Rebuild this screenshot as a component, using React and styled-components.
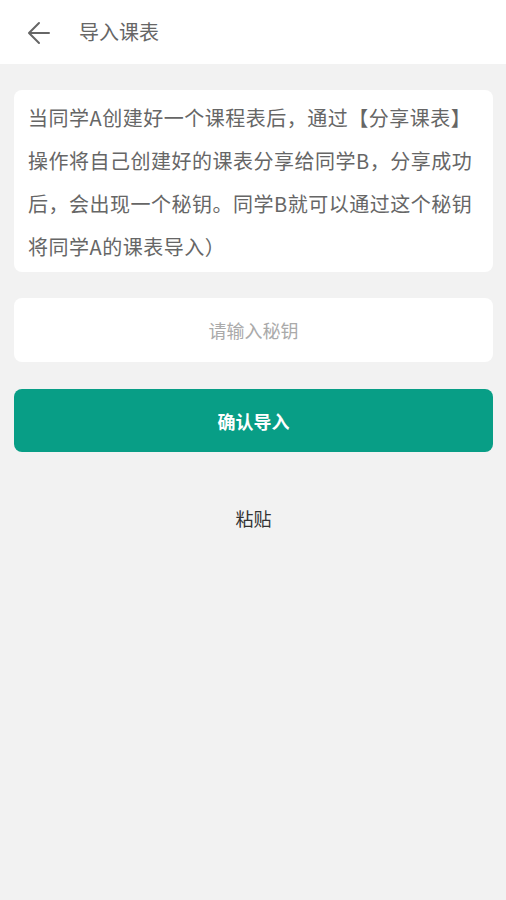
import { createGlobalStyle, styled } from 'styled-components';

const GlobalStyle = createGlobalStyle`
  html, body {
    margin: 0;
    padding: 0;
    background-color: #f2f2f2;
    font-family: "Noto Sans CJK SC", "Noto Sans", sans-serif;
  }
  * {
    box-sizing: border-box;
  }
`;

const BackIcon = () => (
  <svg width="24" height="24" viewBox="0 0 24 24" fill="none">
    <path
      d="M22 12H3M12 2L2 12l10 10"
      stroke="#666"
      strokeWidth="2"
      strokeLinecap="round"
      strokeLinejoin="round"
    />
  </svg>
);

const App = () => {
  return (
    <Page>
      <GlobalStyle />
      <Header>
        <BackButton aria-label="返回">
          <BackIcon />
        </BackButton>
        <Title>导入课表</Title>
      </Header>
      <Content>
        <InfoCard>
          当同学A创建好一个课程表后，通过【分享课表】操作将自己创建好的课表分享给同学B，分享成功后，会出现一个秘钥。同学B就可以通过这个秘钥将同学A的课表导入）
        </InfoCard>
        <KeyInput placeholder="请输入秘钥" />
        <ConfirmButton>确认导入</ConfirmButton>
        <PasteButton>粘贴</PasteButton>
      </Content>
    </Page>
  );
};

const Page = styled.div`
  min-height: 900px;
  background-color: #f2f2f2;
`;

const Header = styled.header`
  display: flex;
  align-items: center;
  height: 64px;
  padding: 0 0 0 27px;
  background-color: #fff;
`;

const BackButton = styled.button`
  display: flex;
  align-items: center;
  justify-content: center;
  padding: 0;
  margin: 2px 0 0;
  border: none;
  background: none;
  cursor: pointer;
`;

const Title = styled.h1`
  margin: 0 0 0 28px;
  font-size: 20px;
  font-weight: 400;
  line-height: 1;
  color: #666;
`;

const Content = styled.main`
  display: flex;
  flex-direction: column;
  padding: 26px 13px 0 14px;
`;

const InfoCard = styled.p`
  margin: 0;
  padding: 6px 14px 4px;
  border-radius: 8px;
  background-color: #fff;
  font-size: 20px;
  letter-spacing: 0.5px;
  line-height: 43px;
  color: #666;
`;

const KeyInput = styled.input`
  height: 64px;
  margin-top: 26px;
  border: none;
  border-radius: 8px;
  background-color: #fff;
  outline: none;
  font-family: inherit;
  font-size: 18px;
  text-align: center;
  color: #333;
  &::placeholder {
    color: #aaa;
  }
`;

const ConfirmButton = styled.button`
  height: 63px;
  margin-top: 27px;
  border: none;
  border-radius: 8px;
  background-color: #089e86;
  font-family: inherit;
  font-size: 18px;
  font-weight: 700;
  color: #fff;
  cursor: pointer;
`;

const PasteButton = styled.button`
  align-self: center;
  margin-top: 54px;
  padding: 0;
  border: none;
  background: none;
  font-family: inherit;
  font-size: 18px;
  line-height: 24px;
  color: #333;
  cursor: pointer;
`;

export default App;
